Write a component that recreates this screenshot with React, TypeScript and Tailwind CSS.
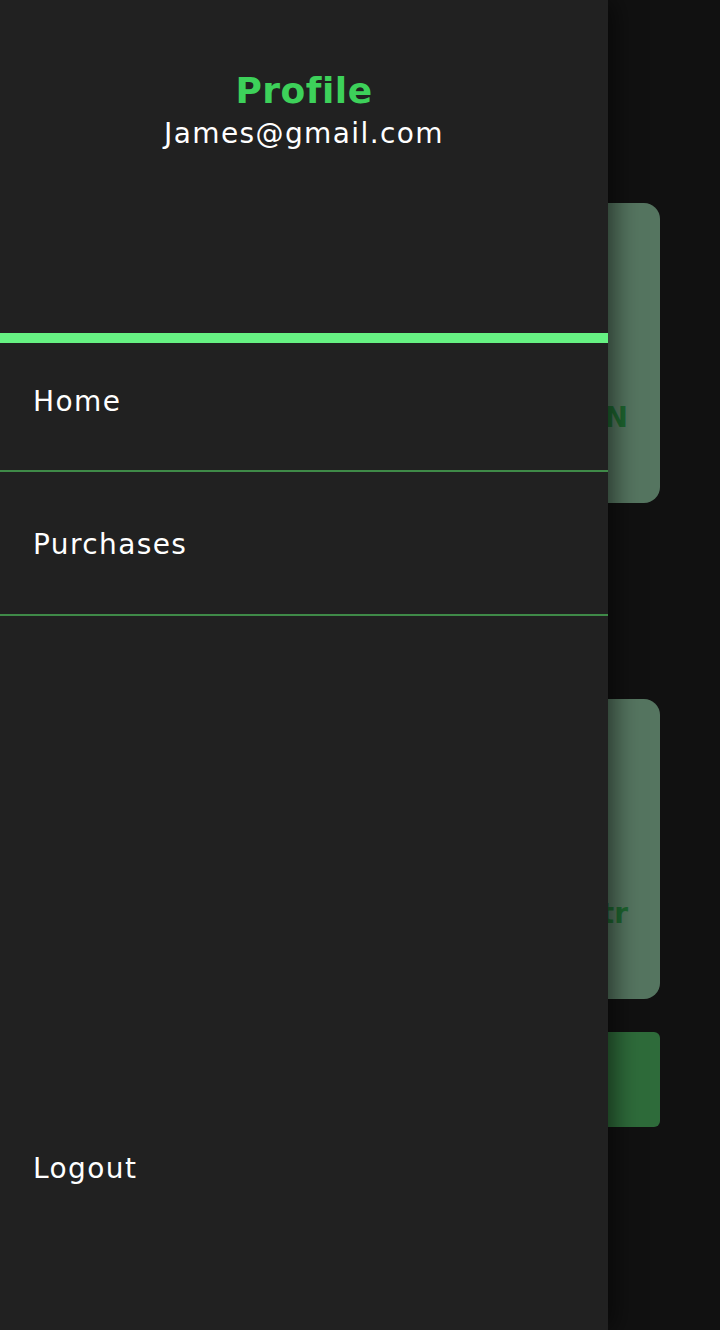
import React from 'react';

const font = { fontFamily: '"DejaVu Sans", "Open Sans", sans-serif' };

function Card({ label }: { label: string }) {
  return (
    <div className="h-[300px] w-[600px] rounded-2xl bg-[#557560] flex items-center justify-end pr-[32px]">
      <span className="mt-[130px] text-[28px] font-bold text-[#1e6630]">{label}</span>
    </div>
  );
}

export default function App() {
  return (
    <div className="relative w-[720px] h-[1330px] overflow-hidden bg-[#111111]" style={font}>
      {/* page behind the drawer */}
      <div className="flex flex-col items-end pr-[60px] pt-[203px]">
        <Card label="DESIGN" />
        <div className="h-[196px]" />
        <Card label="Electr" />
        <div className="h-[33px]" />
        <div className="h-[95px] w-[600px] rounded-md bg-[#2e6b3a]" />
      </div>

      {/* drawer */}
      <div className="absolute left-0 top-0 h-full w-[608px] bg-[#212121] flex flex-col shadow-[6px_0_24px_rgba(0,0,0,0.55)]">
        <div className="h-[333px] flex flex-col items-center pt-[66px]">
          <div className="text-[36px] leading-[50px] font-bold text-[#3dd15a] tracking-[0.5px]">Profile</div>
          <div className="text-[28px] leading-[36px] text-white tracking-[1.4px]">James@gmail.com</div>
        </div>
        <div className="h-[10px] bg-[#66f283]" />
        <div className="h-[127px] flex items-start pl-[33px] pt-[41px] text-[28px] text-white leading-[36px] tracking-[1.4px]">Home</div>
        <div className="h-[2px] bg-[#3f8a48]" />
        <div className="h-[142px] flex items-center pl-[33px] pt-[4px] text-[28px] text-white tracking-[1.4px]">Purchases</div>
        <div className="h-[2px] bg-[#3f8a48]" />
        <div className="flex-1 flex items-end pl-[33px] pb-[140px] text-[28px] text-white tracking-[1.4px]">Logout</div>
      </div>
    </div>
  );
}
